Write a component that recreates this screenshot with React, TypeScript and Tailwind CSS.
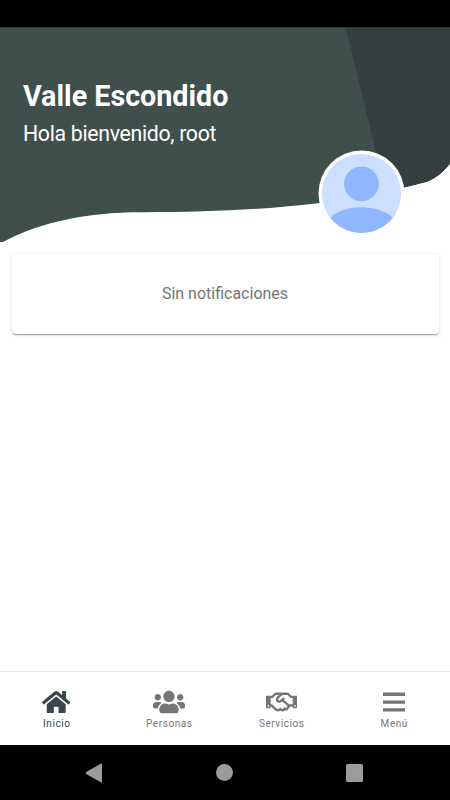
import React from "react";
import { FaHome, FaRegHandshake, FaUsers } from "react-icons/fa";

const tabs = [
  { label: "Inicio", icon: <FaHome className="h-[26px] w-[28.4px]" />, color: "text-[#37474a]" },
  { label: "Personas", icon: <FaUsers className="h-[26px] w-8" />, color: "text-[#757575]" },
  { label: "Servicios", icon: <FaRegHandshake className="h-[26px] w-[31.4px]" />, color: "text-[#757575]" },
  { label: "Menú", icon: <MenuIcon />, color: "text-[#757575]" },
];

function MenuIcon() {
  return (
    <svg width="24" height="26" viewBox="0 0 24 26" fill="currentColor">
      <path d="M1 3.600h22v3.400H1zM1 11.400h22v3.400H1zM1 19.200h22v3.400H1z" />
    </svg>
  );
}

function Avatar() {
  return (
    <svg className="absolute left-[318px] top-[122.5px]" width="87" height="87" viewBox="0 0 87 87">
      <clipPath id="face">
        <circle cx="43.5" cy="43.5" r="39.6" />
      </clipPath>
      <circle cx="43.5" cy="43.5" r="43" fill="#fff" />
      <circle cx="43.5" cy="43.5" r="39.6" fill="#ccdfff" />
      <circle cx="43.5" cy="33.8" r="17.4" fill="#90b6ff" />
      <path
        clipPath="url(#face)"
        d="M12 68 C18 61.500 30 57.300 43.500 57.300 S69 61.500 75 68 V87 H12 Z"
        fill="#90b6ff"
      />
    </svg>
  );
}

export default function App() {
  return (
    <div className="flex h-[800px] w-[450px] flex-col overflow-hidden bg-white font-[Roboto,sans-serif]">
      <div className="h-[27px] shrink-0 bg-black" />

      <header className="relative h-[227px] shrink-0">
        <svg className="absolute inset-0" width="450" height="226" viewBox="0 0 450 226">
          <clipPath id="wave">
            <path d="M0 0H450V136.500C442 147 433 153 424 155.500C402 161 366 170.500 318 176.200C258 183 205 185.500 131 185.200C75 187 34 198 3 215H0Z" />
          </clipPath>
          <g clipPath="url(#wave)">
            <rect width="450" height="226" fill="#3f4f4c" />
            <path d="M345.500 0H450V226H400.500Z" fill="#344040" />
            <rect width="450" height="1" fill="#2c3936" />
          </g>
        </svg>
        <div className="relative pl-[23px] pt-[50px] text-white">
          <h1 className="text-[28.7px] font-bold leading-[38px]">Valle Escondido</h1>
          <p className="pt-1 text-[21.3px] leading-[30px] tracking-[-0.32px]">Hola bienvenido, root</p>
        </div>
        <Avatar />
      </header>

      <main className="flex-1 px-[11.500px]">
        <div className="flex h-20 items-center justify-center rounded-[4px] bg-white text-[16px] text-[#757575] shadow-[0_2px_1px_-1px_rgba(0,0,0,0.24),0_1px_1px_rgba(0,0,0,0.14),0_1px_4px_rgba(0,0,0,0.12)]">
          Sin notificaciones
        </div>
      </main>

      <nav className="grid h-[74px] shrink-0 grid-cols-4 border-t border-[#ededed] bg-white">
        {tabs.map((tab) => (
          <div key={tab.label} className={`flex flex-col items-center pt-[17px] ${tab.color}`}>
            {tab.icon}
            <span className="pt-[2px] pl-px text-[10px] leading-[13px] tracking-[0.55px]">{tab.label}</span>
          </div>
        ))}
      </nav>

      {/* Android buttons */}
      <div className="flex h-[55px] shrink-0 items-center justify-between bg-black pl-[85px] pr-[87px]">
        <svg width="18" height="20" viewBox="0 0 18 20" fill="#9b9b9b">
          <path d="M16.500 .8V19.200L1.200 10.500Q.5 10 1.200 9.500Z" stroke="#9b9b9b" strokeLinejoin="round" />
        </svg>
        <div className="h-[17px] w-[17px] rounded-full bg-[#9b9b9b]" />
        <div className="h-[18px] w-[17.5px] rounded-[1.500px] bg-[#9b9b9b]" />
      </div>
    </div>
  );
}
